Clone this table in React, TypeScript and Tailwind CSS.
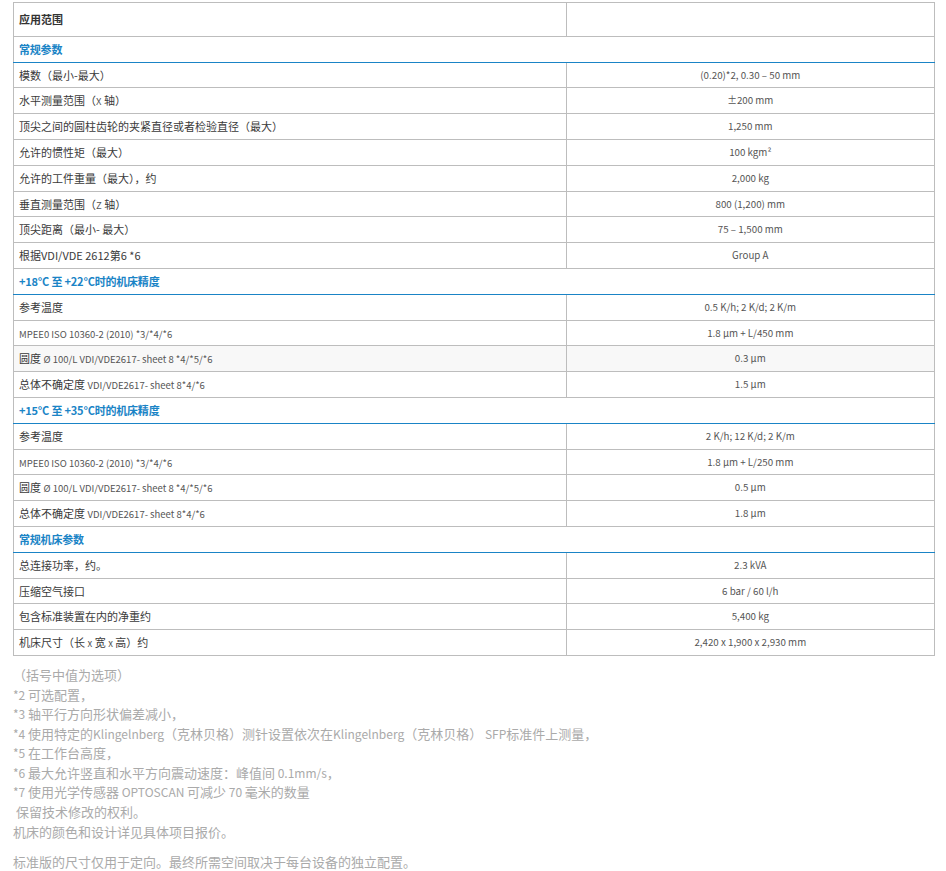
import React from "react"

type Row =
  | { kind: "section"; title: string }
  | { kind: "row"; label: React.ReactNode; value: string; shaded?: boolean }

// latin bits in the labels are set smaller than the chinese text
const Lat = ({ children }: { children: React.ReactNode }) => (
  <span className="text-[9.5px] leading-[10px] text-[#555]">{children}</span>
)

const N = ({ children }: { children: React.ReactNode }) => (
  <span className="text-[12px] leading-[12px]">{children}</span>
)

const rows: Row[] = [
  { kind: "section", title: "常规参数" },
  { kind: "row", label: "模数（最小-最大）", value: "(0.20)*2, 0.30 – 50 mm" },
  { kind: "row", label: <>水平测量范围（<Lat>X</Lat> 轴）</>, value: "±200 mm" },
  { kind: "row", label: "顶尖之间的圆柱齿轮的夹紧直径或者检验直径（最大）", value: "1,250 mm" },
  { kind: "row", label: "允许的惯性矩（最大）", value: "100 kgm²" },
  { kind: "row", label: "允许的工件重量（最大），约", value: "2,000 kg" },
  { kind: "row", label: <>垂直测量范围（<Lat>Z</Lat> 轴）</>, value: "800 (1,200) mm" },
  { kind: "row", label: "顶尖距离（最小- 最大）", value: "75 – 1,500 mm" },
  { kind: "row", label: "根据VDI/VDE 2612第6 *6", value: "Group A" },
  { kind: "section", title: "+18°C 至 +22°C时的机床精度" },
  { kind: "row", label: "参考温度", value: "0.5 K/h; 2 K/d; 2 K/m" },
  { kind: "row", label: <Lat>MPEE0 ISO 10360-2 (2010) *3/*4/*6</Lat>, value: "1.8 µm + L/450 mm" },
  { kind: "row", label: <>圆度 <Lat>Ø 100/L VDI/VDE2617- sheet 8 *4/*5/*6</Lat></>, value: "0.3 µm", shaded: true },
  { kind: "row", label: <>总体不确定度 <Lat>VDI/VDE2617- sheet 8*4/*6</Lat></>, value: "1.5 µm" },
  { kind: "section", title: "+15°C 至 +35°C时的机床精度" },
  { kind: "row", label: "参考温度", value: "2 K/h; 12 K/d; 2 K/m" },
  { kind: "row", label: <Lat>MPEE0 ISO 10360-2 (2010) *3/*4/*6</Lat>, value: "1.8 µm + L/250 mm" },
  { kind: "row", label: <>圆度 <Lat>Ø 100/L VDI/VDE2617- sheet 8 *4/*5/*6</Lat></>, value: "0.5 µm" },
  { kind: "row", label: <>总体不确定度 <Lat>VDI/VDE2617- sheet 8*4/*6</Lat></>, value: "1.8 µm" },
  { kind: "section", title: "常规机床参数" },
  { kind: "row", label: "总连接功率，约。", value: "2.3 kVA" },
  { kind: "row", label: "压缩空气接口", value: "6 bar / 60 l/h" },
  { kind: "row", label: "包含标准装置在内的净重约", value: "5,400 kg" },
  { kind: "row", label: <>机床尺寸（长 <Lat>x</Lat> 宽 <Lat>x</Lat> 高）约</>, value: "2,420 x 1,900 x 2,930 mm" },
]

const notes: React.ReactNode[] = [
  "（括号中值为选项）",
  <><N>*2 </N>可选配置，</>,
  <><N>*3 </N>轴平行方向形状偏差减小，</>,
  <>
    <N>*4 </N>使用特定的<N>Klingelnberg</N>（克林贝格）测针设置依次在<N>Klingelnberg</N>（克林贝格）<N> SFP</N>标准件上测量，
  </>,
  <><N>*5 </N>在工作台高度，</>,
  <><N>*6 </N>最大允许竖直和水平方向震动速度：峰值间<N> 0.1mm/s</N>，</>,
  <><N>*7 </N>使用光学传感器<N> OPTOSCAN </N>可减少<N> 70 </N>毫米的数量</>,
  "\u00a0保留技术修改的权利。",
  "机床的颜色和设计详见具体项目报价。",
]

export default function App() {
  return (
    <div
      className="bg-white px-[13px] pt-[2px] pb-2 text-[#333]"
      style={{ fontFamily: '"Noto Sans CJK SC", "Noto Sans", sans-serif' }}
    >
      <table className="w-[922px] table-fixed border-collapse text-[11px] leading-[16.8px]">
        <colgroup>
          <col className="w-[60%]" />
          <col className="w-[40%]" />
        </colgroup>
        <tbody>
          <tr>
            <td className="border border-[#bdbdbd] px-[5px] py-2 font-bold text-[#333]">应用范围</td>
            <td className="border border-[#bdbdbd]"></td>
          </tr>
          {rows.map((r, i) =>
            r.kind === "section" ? (
              <tr key={i}>
                <td
                  colSpan={2}
                  className="border border-b-[#1a84c6] border-[#bdbdbd] px-[5px] py-1 font-bold tracking-[-0.2px] text-[#1a84c6]"
                >
                  {r.title}
                </td>
              </tr>
            ) : (
              <tr key={i} className={r.shaded ? "bg-[#f8f8f8]" : ""}>
                <td className="border border-[#bdbdbd] px-[5px] py-1 text-[#3a3a3a]">{r.label}</td>
                <td className="border border-[#bdbdbd] px-[5px] py-1 text-center text-[9.75px] text-[#555]">
                  {r.value}
                </td>
              </tr>
            )
          )}
        </tbody>
      </table>

      <div className="mt-[9px] text-[13px] leading-[19.6px] text-[#aaa]">
        {notes.map((n, i) => (
          <div key={i}>{n}</div>
        ))}
        <p className="mt-[11px]">标准版的尺寸仅用于定向。最终所需空间取决于每台设备的独立配置。</p>
      </div>
    </div>
  )
}
